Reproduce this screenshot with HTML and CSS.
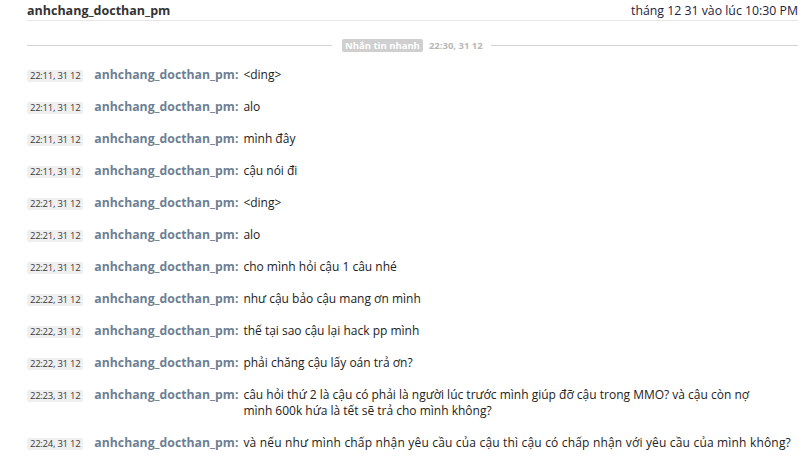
FILE: index.html
```html
<!DOCTYPE html>
<html lang="vi">
<head>
<meta charset="utf-8">
<link rel="stylesheet" href="styles.css">
</head>
<body>
<div class="page">
  <div class="header">
    <span class="title">anhchang_docthan_pm</span>
    <span class="date">tháng 12 31 vào lúc 10:30 PM</span>
  </div>
  <div class="divider">
    <span class="line short"></span>
    <span class="badge">Nhắn tin nhanh</span>
    <span class="dtime">22:30, 31 12</span>
    <span class="line"></span>
  </div>
  <div class="msgs">
    <div class="row"><span class="ts">22:11, 31 12</span><span class="name">anhchang_docthan_pm:</span><span class="text">&lt;ding&gt;</span></div>
    <div class="row"><span class="ts">22:11, 31 12</span><span class="name">anhchang_docthan_pm:</span><span class="text">alo</span></div>
    <div class="row"><span class="ts">22:11, 31 12</span><span class="name">anhchang_docthan_pm:</span><span class="text">mình đây</span></div>
    <div class="row"><span class="ts">22:11, 31 12</span><span class="name">anhchang_docthan_pm:</span><span class="text">cậu nói đi</span></div>
    <div class="row"><span class="ts">22:21, 31 12</span><span class="name">anhchang_docthan_pm:</span><span class="text">&lt;ding&gt;</span></div>
    <div class="row"><span class="ts">22:21, 31 12</span><span class="name">anhchang_docthan_pm:</span><span class="text">alo</span></div>
    <div class="row"><span class="ts">22:21, 31 12</span><span class="name">anhchang_docthan_pm:</span><span class="text">cho mình hỏi cậu 1 câu nhé</span></div>
    <div class="row"><span class="ts">22:22, 31 12</span><span class="name">anhchang_docthan_pm:</span><span class="text">như cậu bảo cậu mang ơn mình</span></div>
    <div class="row"><span class="ts">22:22, 31 12</span><span class="name">anhchang_docthan_pm:</span><span class="text">thế tại sao cậu lại hack pp mình</span></div>
    <div class="row"><span class="ts">22:22, 31 12</span><span class="name">anhchang_docthan_pm:</span><span class="text">phải chăng cậu lấy oán trả ơn?</span></div>
    <div class="row"><span class="ts">22:23, 31 12</span><span class="name">anhchang_docthan_pm:</span><span class="text">câu hỏi thứ 2 là cậu có phải là người lúc trước mình giúp đỡ cậu trong MMO? và cậu còn nợ<br>mình 600k hứa là tết sẽ trả cho mình không?</span></div>
    <div class="row"><span class="ts">22:24, 31 12</span><span class="name">anhchang_docthan_pm:</span><span class="text wide">và nếu như mình chấp nhận yêu cầu của cậu thì cậu có chấp nhận với yêu cầu của mình không?</span></div>
  </div>
</div>
</body>
</html>
```

FILE: styles.css
```css
html, body {
  margin: 0;
  padding: 0;
  background: #fff;
}
.page {
  padding: 0 12px 0 27px;
  font-family: "Open Sans", "Noto Sans", sans-serif;
  font-size: 12px;
  color: #222;
}
.header {
  display: flex;
  justify-content: space-between;
  align-items: center;
  height: 20px;
  border-bottom: 1px solid #e6e6e6;
  margin-top: -4px;
  padding-top: 4px;
}
.title {
  font-weight: 700;
  font-size: 12.5px;
  color: #333;
}
.date {
  color: #1d2340;
  font-size: 12.3px;
}
.divider {
  display: flex;
  align-items: center;
  gap: 8px;
  margin-top: 17px;
  height: 14px;
}
.line {
  flex: 1;
  height: 1px;
  background: #d2d2d2;
}
.line.short {
  flex: 0 0 305px;
}
.badge {
  background: #cfcfcf;
  color: #fff;
  font-weight: 700;
  font-size: 9.5px;
  padding: 0 3px;
  line-height: 13px;
  border-radius: 2px;
  margin-left: 2px;
}
.dtime {
  color: #b8b8b8;
  font-weight: 700;
  font-size: 9.5px;
  margin-left: -2px;
}
.msgs {
  display: flex;
  flex-direction: column;
  gap: 16px;
  margin-top: 15px;
}
.row {
  display: flex;
  align-items: flex-start;
  line-height: 16px;
}
.ts {
  flex: 0 0 auto;
  background: #efefef;
  color: #3a3a3a;
  font-size: 9.5px;
  line-height: 12px;
  padding: 0 3px;
  border-radius: 2px;
  margin-top: 3px;
  margin-right: 11px;
  letter-spacing: -0.25px;
}
.name {
  flex: 0 0 auto;
  font-weight: 700;
  font-size: 12.25px;
  color: #6e7f93;
  margin-right: 5px;
}
.text {
  color: #222;
}
.text.wide {
  letter-spacing: 0.18px;
}
```
